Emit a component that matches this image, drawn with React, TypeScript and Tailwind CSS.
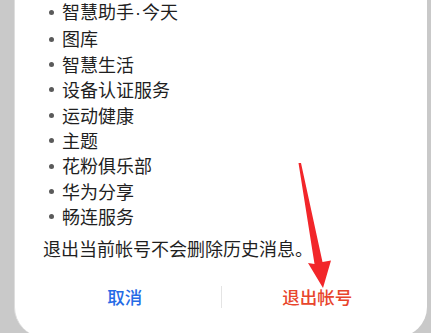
import React from 'react';

const services = [
  '智慧助手·今天',
  '图库',
  '智慧生活',
  '设备认证服务',
  '运动健康',
  '主题',
  '花粉俱乐部',
  '华为分享',
  '畅连服务',
];

const font = { fontFamily: '"Noto Sans CJK SC", "Noto Sans", sans-serif' };

// narrow middle dot, as in the reference
const renderName = (name: string) => {
  const parts = name.split('·');
  if (parts.length === 1) return name;
  return (
    <>
      {parts[0]}
      <span className="mx-[1px] font-['Liberation_Sans']">·</span>
      {parts[1]}
    </>
  );
};

const Arrow: React.FC = () => (
  <svg className="pointer-events-none absolute left-0 top-0" width="431" height="333" viewBox="0 0 431 333">
    <polygon points="298.5,163 301,163 322.5,262 331,260.5 323,288 308,263 314.5,264" fill="#f2262a" />
  </svg>
);

export default function App() {
  return (
    <div className="relative flex h-[333px] w-[431px] overflow-hidden bg-[#c9c9c9]" style={font}>
      <div className="ml-[14px] flex h-[337px] w-[413px] flex-col rounded-b-[30px] border-l border-[#dedede] bg-white">
        <ul className="-mt-[1px] pl-[34px] text-[18px] leading-[25.4px] text-[#1f1f1f]">
          {services.map((name) => (
            <li key={name} className="flex items-center">
              <span className="mr-[8px] h-[5px] w-[5px] rounded-full bg-[#5a5a5a]" />
              <span>{renderName(name)}</span>
            </li>
          ))}
        </ul>
        <p className="mt-[6px] pl-[28px] text-[18px] leading-[25px] text-[#1f1f1f]">
          退出当前帐号不会删除历史消息。
        </p>
        <div className="mt-[24px] flex items-center px-[14px]">
          <button className="flex-1 text-[17.5px] font-medium leading-[24px] text-[#256be6]">取消</button>
          <div className="h-[22px] w-px bg-[#e4e4e4]" />
          <button className="flex-1 text-[17.5px] font-medium leading-[24px] text-[#e8452c]">退出帐号</button>
        </div>
      </div>
      <Arrow />
    </div>
  );
}
